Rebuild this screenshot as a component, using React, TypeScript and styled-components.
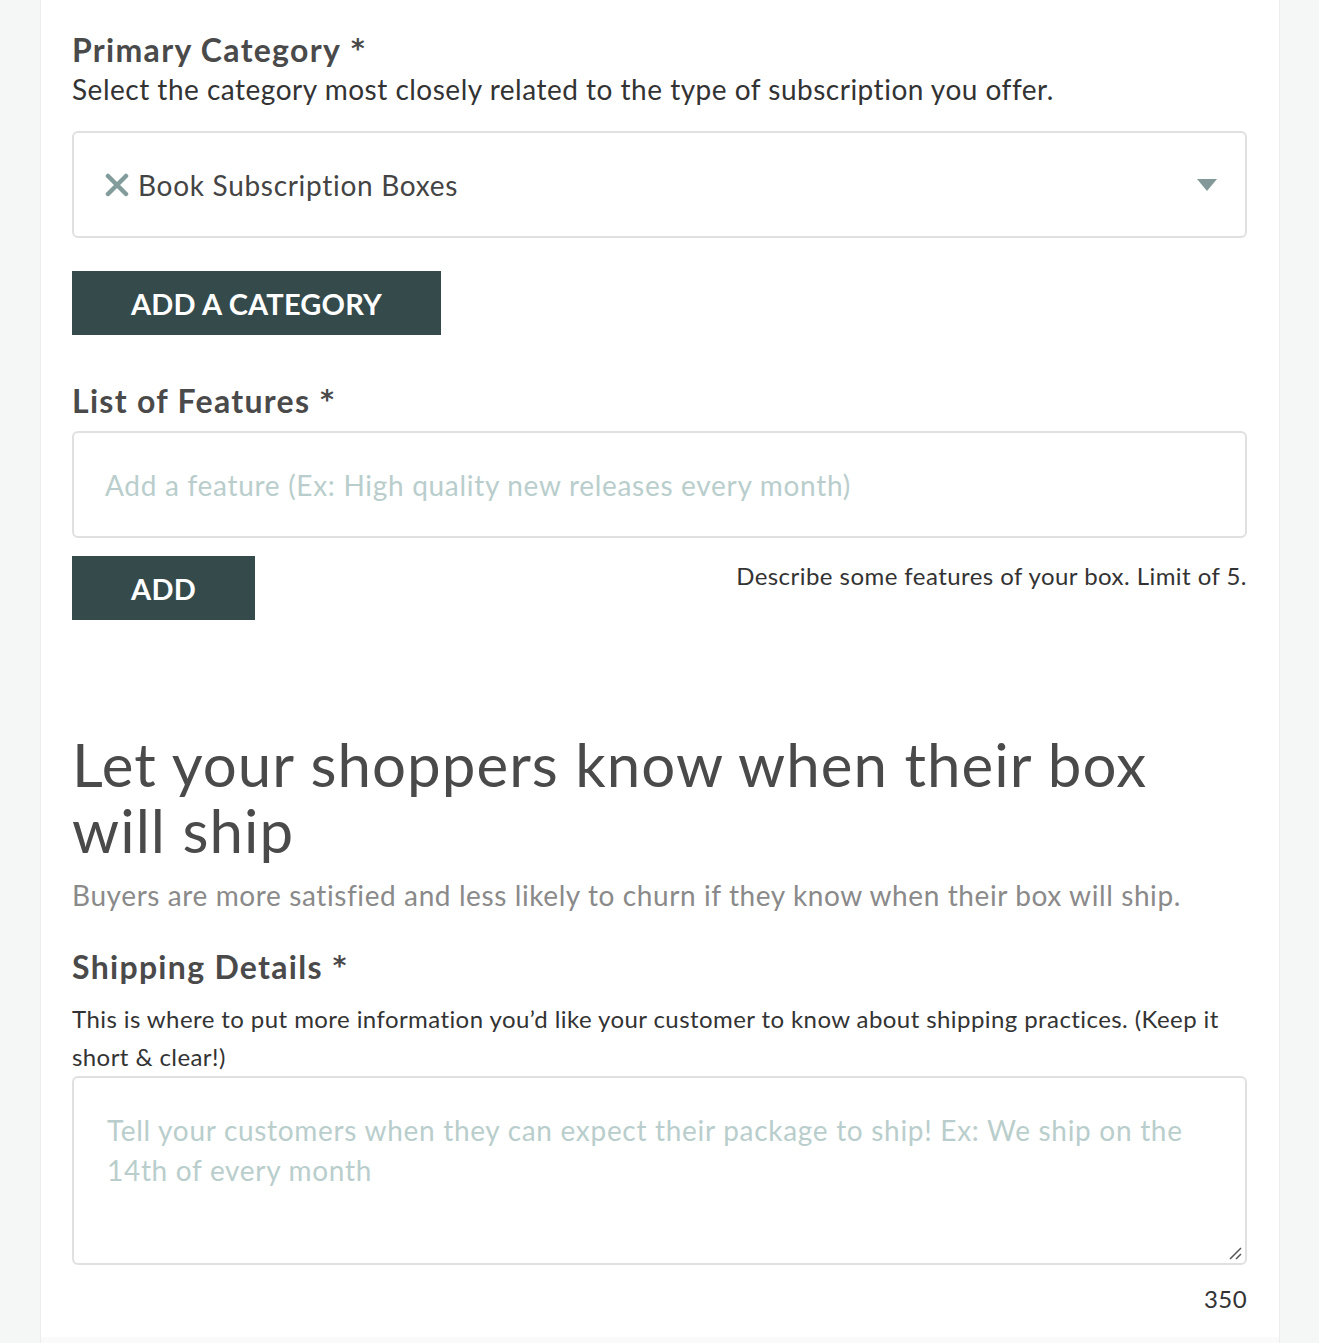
import React from 'react';
import styled, { createGlobalStyle } from 'styled-components';

const GlobalStyle = createGlobalStyle`
  html, body {
    margin: 0;
    padding: 0;
    background: #f5f7f6;
  }
  body {
    font-family: 'Lato', 'Open Sans', sans-serif;
    color: #333;
  }
  * { box-sizing: border-box; }
`;

const Page = styled.div`
  width: 1319px;
  min-height: 1343px;
  padding: 0 39px 0 40px;
`;

const Card = styled.div`
  background: #fff;
  border-left: 1px solid #eceeed;
  border-right: 1px solid #eceeed;
  padding: 30px 32px 18px 31px;
`;

const CardFoot = styled.div`
  height: 24px;
  background: #fafafa;
  border-left: 1px solid #eceeed;
  border-right: 1px solid #eceeed;
`;

const Label = styled.h3`
  margin: 0;
  font-size: 32px;
  font-weight: 700;
  letter-spacing: 1.3px;
  color: #4a4a4a;
  line-height: 40px;
`;

const Star = styled.span`
  font-family: 'DejaVu Sans', sans-serif;
  font-size: 26px;
  line-height: 0;
  margin-left: 10px;
  vertical-align: 4px;
`;

const Help = styled.p`
  margin: 0;
  font-size: 28px;
  letter-spacing: 0.5px;
  line-height: 38px;
  color: #333;
`;

const Field = styled.div<{ $tall?: boolean }>`
  position: relative;
  border: 2px solid #e0e0e0;
  border-radius: 6px;
  height: ${(p) => (p.$tall ? '189px' : '107px')};
  display: flex;
  align-items: ${(p) => (p.$tall ? 'flex-start' : 'center')};
  padding: ${(p) => (p.$tall ? '32px 60px 0 33px' : '0 28px 0 31px')};
  font-size: 28px;
  letter-spacing: 0.7px;
  line-height: 40px;
`;

const SelectValue = styled.div`
  flex: 1;
  display: flex;
  align-items: center;
  gap: 9px;
  color: #444;
`;

const Placeholder = styled.span`
  color: #b9cecc;
`;

const Button = styled.button<{ $width: number }>`
  width: ${(p) => p.$width}px;
  height: 64px;
  background: #344a4b;
  color: #fff;
  border: none;
  font-family: inherit;
  font-size: 29px;
  font-weight: 700;
  letter-spacing: 0.2px;
  text-transform: uppercase;
  padding: 0;
  cursor: pointer;
`;

const FeatureRow = styled.div`
  display: flex;
  justify-content: space-between;
  align-items: flex-start;
  margin-top: 18px;
`;

const Note = styled.span`
  font-size: 24px;
  letter-spacing: 0.45px;
  line-height: 40px;
  color: #333;
`;

const BigTitle = styled.h2`
  margin: 111px 0 0;
  font-size: 60px;
  font-weight: 400;
  letter-spacing: 1.05px;
  line-height: 66px;
  color: #4a4a4a;
`;

const SubTitle = styled.p`
  margin: 12px 0 0;
  font-size: 28px;
  letter-spacing: 0.6px;
  line-height: 40px;
  color: #8a8a8a;
`;

const SmallHelp = styled.p`
  margin: 13px 0 0;
  font-size: 24px;
  letter-spacing: 0.42px;
  line-height: 38px;
  color: #333;
`;

const Counter = styled.div`
  text-align: right;
  font-size: 24px;
  letter-spacing: 0.4px;
  line-height: 40px;
  margin-top: 14px;
  color: #333;
`;

const Resize = styled.svg`
  position: absolute;
  right: 3px;
  bottom: 3px;
`;

const Section = styled.div<{ $mt?: number }>`
  margin-top: ${(p) => p.$mt ?? 0}px;
`;

const App: React.FC = () => {
  return (
    <Page>
      <GlobalStyle />
      <Card>
        <Label>
          Primary Category<Star>*</Star>
        </Label>
        <Help>Select the category most closely related to the type of subscription you offer.</Help>
        <Section $mt={23}>
          <Field>
            <SelectValue>
              <svg width="24" height="24" viewBox="0 0 24 24">
                <path d="M3 3 L21 21 M21 3 L3 21" stroke="#829b9b" strokeWidth="4.5" strokeLinecap="round" />
              </svg>
              <span>Book Subscription Boxes</span>
            </SelectValue>
            <svg width="20" height="12" viewBox="0 0 20 12">
              <path d="M0 0 H20 L10 12 Z" fill="#839999" />
            </svg>
          </Field>
        </Section>
        <Section $mt={33}>
          <Button $width={369}>Add a category</Button>
        </Section>
        <Section $mt={46}>
          <Label>
            List of Features<Star>*</Star>
          </Label>
        </Section>
        <Section $mt={10}>
          <Field>
            <Placeholder>Add a feature (Ex: High quality new releases every month)</Placeholder>
          </Field>
        </Section>
        <FeatureRow>
          <Button $width={183}>Add</Button>
          <Note>Describe some features of your box. Limit of 5.</Note>
        </FeatureRow>
        <BigTitle>Let your shoppers know when their box will ship</BigTitle>
        <SubTitle>Buyers are more satisfied and less likely to churn if they know when their box will ship.</SubTitle>
        <Section $mt={32}>
          <Label>
            Shipping Details<Star>*</Star>
          </Label>
        </Section>
        <SmallHelp>
          This is where to put more information you’d like your customer to know about shipping practices. (Keep it
          short &amp; clear!)
        </SmallHelp>
        <Field $tall>
          <Placeholder>
            Tell your customers when they can expect their package to ship! Ex: We ship on the 14th of every month
          </Placeholder>
          <Resize width="14" height="14" viewBox="0 0 14 14">
            <path d="M2 13 L13 2 M8 13 L13 8" stroke="#555" strokeWidth="1.5" />
          </Resize>
        </Field>
        <Counter>350</Counter>
      </Card>
      <CardFoot />
    </Page>
  );
};

export default App;
